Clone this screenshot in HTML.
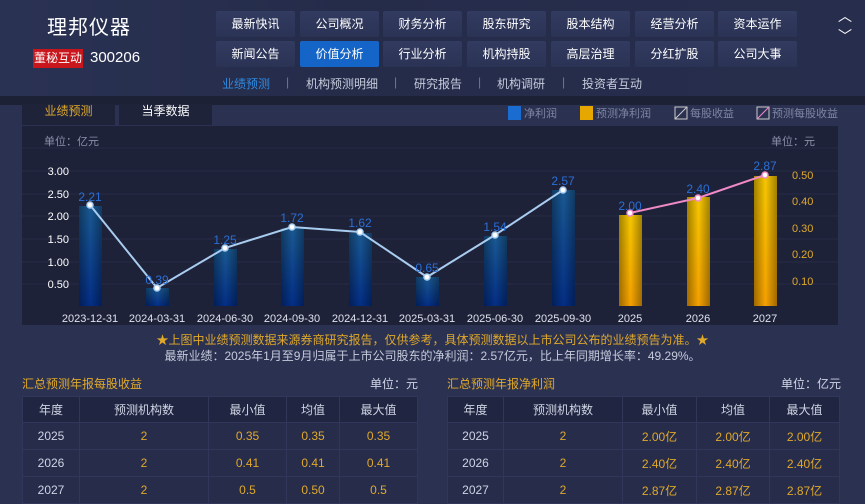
<!DOCTYPE html>
<html><head><meta charset="utf-8"><style>
*{margin:0;padding:0;box-sizing:border-box}
body{width:865px;height:496px;overflow:hidden;background:#2b3151;font-family:"Liberation Sans","Noto Sans CJK SC",sans-serif;position:relative;color:#cfd4e4}
.hdr{position:absolute;left:0;top:0;width:865px;height:96px;background:linear-gradient(90deg,#2a3254,#252c4a 40%,#272e4d);}
.strip{position:absolute;left:0;top:96px;width:865px;height:9px;background:#1d2136}
.title{position:absolute;left:47px;top:11px;font-size:20px;color:#fff;letter-spacing:1px}
.badge{position:absolute;left:33px;top:49px;width:50px;height:19px;background:#c8161c;color:#fff;font-size:12px;line-height:19px;text-align:center}
.code{position:absolute;left:90px;top:49px;font-size:15px;color:#fff}
.btn{position:absolute;width:79px;height:26px;background:linear-gradient(#323b60,#2b3355);color:#fff;font-size:12px;line-height:26px;text-align:center;border-radius:2px}
.btn.on{background:#1565c8}
.sub{position:absolute;top:75px;font-size:12px;color:#c5cbdb}
.arr{position:absolute;left:838px;color:#fff;font-size:14px}
.tab{position:absolute;top:104px;height:21px;width:93px;background:#1e2339;font-size:12px;line-height:15px;text-align:center}
.note{position:absolute;left:0;width:865px;text-align:center;font-size:12px}
.sect{position:absolute;top:375px;font-size:12px;color:#e0a92a}
.unit{position:absolute;top:375px;font-size:12px;color:#cfd4e4}
table{position:absolute;border-collapse:collapse;font-size:12px;top:396px}
td{height:27px;text-align:center;border:1px solid #30375a;background:#262c4a;color:#cfd4e4}
tr.h td{background:#202641;height:26px}
td.g{color:#e0a92a}
</style></head><body>
<div class="hdr"></div>
<div class="title">理邦仪器</div>
<div class="badge">董秘互动</div>
<div class="code">300206</div>
<div class="btn" style="left:216px;top:11px">最新快讯</div>
<div class="btn" style="left:300px;top:11px">公司概况</div>
<div class="btn" style="left:383px;top:11px">财务分析</div>
<div class="btn" style="left:467px;top:11px">股东研究</div>
<div class="btn" style="left:551px;top:11px">股本结构</div>
<div class="btn" style="left:635px;top:11px">经营分析</div>
<div class="btn" style="left:718px;top:11px">资本运作</div>
<div class="btn" style="left:216px;top:41px">新闻公告</div>
<div class="btn on" style="left:300px;top:41px">价值分析</div>
<div class="btn" style="left:383px;top:41px">行业分析</div>
<div class="btn" style="left:467px;top:41px">机构持股</div>
<div class="btn" style="left:551px;top:41px">高层治理</div>
<div class="btn" style="left:635px;top:41px">分红扩股</div>
<div class="btn" style="left:718px;top:41px">公司大事</div>
<div class="arr" style="top:6px">︿</div>
<div class="arr" style="top:26px">﹀</div>
<div class="sub" style="left:222px;color:#2f8ae0">业绩预测</div>
<div class="sub" style="left:286px;color:#777">|</div>
<div class="sub" style="left:306px">机构预测明细</div>
<div class="sub" style="left:394px;color:#777">|</div>
<div class="sub" style="left:414px">研究报告</div>
<div class="sub" style="left:478px;color:#777">|</div>
<div class="sub" style="left:497px">机构调研</div>
<div class="sub" style="left:562px;color:#777">|</div>
<div class="sub" style="left:582px">投资者互动</div>
<div class="strip"></div>
<div class="tab" style="left:22px;color:#e0a92a">业绩预测</div>
<div class="tab" style="left:119px;color:#fff">当季数据</div>
<svg style="position:absolute;left:0;top:0" width="865" height="330" font-family="Liberation Sans,Noto Sans CJK SC,sans-serif">
<defs>
<linearGradient id="b" x1="0" y1="0" x2="0" y2="1"><stop offset="0" stop-color="#1a5a94"/><stop offset="1" stop-color="#032e86"/></linearGradient>
<linearGradient id="bh" x1="0" y1="0" x2="1" y2="0"><stop offset="0" stop-color="#000" stop-opacity=".35"/><stop offset=".5" stop-color="#000" stop-opacity="0"/><stop offset="1" stop-color="#000" stop-opacity=".35"/></linearGradient>
<linearGradient id="y" x1="0" y1="0" x2="0" y2="1"><stop offset="0" stop-color="#f7c800"/><stop offset="1" stop-color="#f5a000"/></linearGradient>
</defs>
<rect x="22" y="126" width="816" height="199" fill="#1e2239"/>
<rect x="838" y="126" width="27" height="199" fill="#2b3151"/>
<g font-size="11" fill="#8a90a8"><text x="44" y="145">单位：亿元</text><text x="771" y="145">单位：元</text></g>
<g stroke="#262c45" stroke-width="1">
<line x1="22" y1="148" x2="838" y2="148"/><line x1="22" y1="171" x2="838" y2="171"/><line x1="22" y1="194" x2="838" y2="194"/><line x1="22" y1="216" x2="838" y2="216"/><line x1="22" y1="239" x2="838" y2="239"/><line x1="22" y1="262" x2="838" y2="262"/><line x1="22" y1="284" x2="838" y2="284"/></g>
<g font-size="11" fill="#fff" text-anchor="end"><text x="69" y="175">3.00</text><text x="69" y="198">2.50</text><text x="69" y="220">2.00</text><text x="69" y="243">1.50</text><text x="69" y="266">1.00</text><text x="69" y="288">0.50</text></g>
<g font-size="11" fill="#e0a92a"><text x="792" y="179">0.50</text><text x="792" y="205">0.40</text><text x="792" y="232">0.30</text><text x="792" y="258">0.20</text><text x="792" y="285">0.10</text></g>
<g fill="url(#b)">
<rect x="79" y="206" width="23" height="100"/><rect x="146" y="288" width="23" height="18"/><rect x="214" y="249" width="23" height="57"/><rect x="281" y="228" width="23" height="78"/><rect x="349" y="233" width="23" height="73"/><rect x="416" y="277" width="23" height="29"/><rect x="484" y="236" width="23" height="70"/><rect x="552" y="190" width="23" height="116"/></g>
<g fill="url(#y)"><rect x="619" y="215" width="23" height="91"/><rect x="687" y="197" width="23" height="109"/><rect x="754" y="176" width="23" height="130"/></g>
<g fill="url(#bh)"><rect x="79" y="206" width="23" height="100"/><rect x="146" y="288" width="23" height="18"/><rect x="214" y="249" width="23" height="57"/><rect x="281" y="228" width="23" height="78"/><rect x="349" y="233" width="23" height="73"/><rect x="416" y="277" width="23" height="29"/><rect x="484" y="236" width="23" height="70"/><rect x="552" y="190" width="23" height="116"/><rect x="619" y="215" width="23" height="91"/><rect x="687" y="197" width="23" height="109"/><rect x="754" y="176" width="23" height="130"/></g>
<polyline points="90,205 157,288 225,248 292,227 360,232 427,277 495,235 563,190" fill="none" stroke="#a9cdf0" stroke-width="2"/>
<polyline points="630,213 698,198 765,175" fill="none" stroke="#f08ac6" stroke-width="2"/>
<g fill="#fff" stroke="#a9cdf0" stroke-width="1.5"><circle cx="90" cy="205" r="3"/><circle cx="157" cy="288" r="3"/><circle cx="225" cy="248" r="3"/><circle cx="292" cy="227" r="3"/><circle cx="360" cy="232" r="3"/><circle cx="427" cy="277" r="3"/><circle cx="495" cy="235" r="3"/><circle cx="563" cy="190" r="3"/></g>
<g fill="#fff" stroke="#f08ac6" stroke-width="1.5"><circle cx="630" cy="213" r="3"/><circle cx="698" cy="198" r="3"/><circle cx="765" cy="175" r="3"/></g>
<g font-size="12" fill="#2a6fd6" text-anchor="middle"><text x="90" y="201">2.21</text><text x="157" y="284">0.39</text><text x="225" y="244">1.25</text><text x="292" y="222">1.72</text><text x="360" y="227">1.62</text><text x="427" y="272">0.65</text><text x="495" y="231">1.54</text><text x="563" y="185">2.57</text><text x="630" y="210">2.00</text><text x="698" y="193">2.40</text><text x="765" y="170">2.87</text></g>
<g font-size="11" fill="#dfe3ee" text-anchor="middle"><text x="90" y="322">2023-12-31</text><text x="157" y="322">2024-03-31</text><text x="225" y="322">2024-06-30</text><text x="292" y="322">2024-09-30</text><text x="360" y="322">2024-12-31</text><text x="427" y="322">2025-03-31</text><text x="495" y="322">2025-06-30</text><text x="563" y="322">2025-09-30</text><text x="630" y="322">2025</text><text x="698" y="322">2026</text><text x="765" y="322">2027</text></g>
<g font-size="11" fill="#7f86a3">
<rect x="508" y="106" width="13" height="14" fill="#1a6cd0"/><text x="524" y="117">净利润</text>
<rect x="580" y="106" width="13" height="14" fill="#e6a800"/><text x="596" y="117">预测净利润</text>
<rect x="675" y="107" width="12" height="12" fill="none" stroke="#ccc"/><line x1="675" y1="119" x2="687" y2="107" stroke="#ccc"/><text x="690" y="117">每股收益</text>
<rect x="757" y="107" width="12" height="12" fill="none" stroke="#ccc"/><line x1="757" y1="119" x2="769" y2="107" stroke="#f08ac6"/><text x="772" y="117">预测每股收益</text></g>
</svg>
<div class="note" style="top:331px;color:#e0a92a">★上图中业绩预测数据来源券商研究报告，仅供参考，具体预测数据以上市公司公布的业绩预告为准。★</div>
<div class="note" style="top:347px;color:#c5cbdb">最新业绩：2025年1月至9月归属于上市公司股东的净利润：2.57亿元，比上年同期增长率：49.29%。</div>
<div class="sect" style="left:22px">汇总预测年报每股收益</div>
<div class="unit" style="left:370px">单位：元</div>
<div class="sect" style="left:447px">汇总预测年报净利润</div>
<div class="unit" style="left:781px">单位：亿元</div>
<table style="left:22px;width:396px">
<tr class="h"><td style="width:57px">年度</td><td style="width:129px">预测机构数</td><td style="width:78px">最小值</td><td style="width:53px">均值</td><td>最大值</td></tr>
<tr><td>2025</td><td class="g">2</td><td class="g">0.35</td><td class="g">0.35</td><td class="g">0.35</td></tr>
<tr><td>2026</td><td class="g">2</td><td class="g">0.41</td><td class="g">0.41</td><td class="g">0.41</td></tr>
<tr><td>2027</td><td class="g">2</td><td class="g">0.5</td><td class="g">0.50</td><td class="g">0.5</td></tr>
</table>
<table style="left:447px;width:393px">
<tr class="h"><td style="width:56px">年度</td><td style="width:119px">预测机构数</td><td style="width:74px">最小值</td><td style="width:73px">均值</td><td>最大值</td></tr>
<tr><td>2025</td><td class="g">2</td><td class="g">2.00亿</td><td class="g">2.00亿</td><td class="g">2.00亿</td></tr>
<tr><td>2026</td><td class="g">2</td><td class="g">2.40亿</td><td class="g">2.40亿</td><td class="g">2.40亿</td></tr>
<tr><td>2027</td><td class="g">2</td><td class="g">2.87亿</td><td class="g">2.87亿</td><td class="g">2.87亿</td></tr>
</table>
</body></html>
